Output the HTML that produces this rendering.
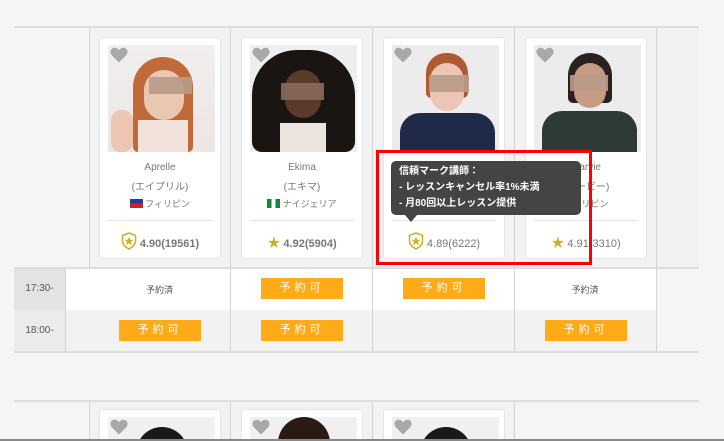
<!DOCTYPE html>
<html style="width:724px;height:441px;overflow:hidden"><head><meta charset="utf-8"><style>
*{margin:0;padding:0;box-sizing:border-box}
body{width:724px;height:441px;overflow:hidden;background:#f5f5f5;font-family:"Liberation Sans","Noto Sans CJK JP",sans-serif;position:relative;color:#666}
.abs{position:absolute}
.hl{position:absolute;height:2px;background:#ddd}
.vl{position:absolute;width:1px;background:#d4d4d4}
.card{position:absolute;width:122px;height:222px;background:#fff;border:1px solid #e6e6e6;border-radius:4px;overflow:hidden}
.photo{position:absolute;left:8px;top:7px;width:107px;height:107px;overflow:hidden;background:#eee}
.heart{position:absolute;left:10px;top:9px;width:18px;height:16px}
.name{position:absolute;left:0;width:100%;text-align:center;font-size:10px;color:#777}
.div{position:absolute;left:8px;right:8px;top:182px;height:1px;background:#e3e3e3}
.rate{position:absolute;top:194px;left:0;width:100%;text-align:center;font-size:11px;color:#777;font-weight:bold}
.rate svg{vertical-align:-3px;margin-right:3px}
.btn{position:absolute;width:82px;height:21px;background:#ffab18;color:#fff;font-size:11px;text-align:center;line-height:21px;letter-spacing:4px}
.blur{position:absolute;background:#b99a8a;opacity:.9}
</style></head><body>
<svg width="0" height="0" style="position:absolute"><defs>
<symbol id="h" viewBox="0 0 18 16"><path d="M9 15.5 L2 8.5 C-0.5 6 0 1.5 4 0.8 C6.3 0.4 8 1.8 9 3.3 C10 1.8 11.7 0.4 14 0.8 C18 1.5 18.5 6 16 8.5 Z" fill="#a8a8a8"/></symbol>
<symbol id="sh" viewBox="0 0 16 18"><path d="M8 1 L14.5 3.5 L14.5 9 C14.5 13 11 15.5 8 17 C5 15.5 1.5 13 1.5 9 L1.5 3.5 Z" fill="#fff" stroke="#c9b22a" stroke-width="1.6"/><path d="M8 4.5 L9.2 7.8 L12.5 7.9 L9.9 9.9 L10.8 13.1 L8 11.2 L5.2 13.1 L6.1 9.9 L3.5 7.9 L6.8 7.8 Z" fill="#c9b22a"/></symbol>
</defs></svg>
<div class="hl" style="left:14px;top:26px;width:685px"></div>
<div class="abs" style="left:89px;top:28px;width:610px;height:240px;background:#f2f2f2"></div>
<div class="hl" style="left:14px;top:267px;width:685px"></div>
<div class="abs" style="left:14px;top:269px;width:51px;height:41px;background:#e3e3e3"></div>
<div class="abs" style="left:65px;top:269px;width:591px;height:41px;background:#fff"></div>
<div class="abs" style="left:14px;top:310px;width:51px;height:41px;background:#ebebeb"></div>
<div class="abs" style="left:65px;top:310px;width:591px;height:41px;background:#f2f2f2"></div>
<div class="hl" style="left:14px;top:351px;width:685px"></div>
<div class="vl" style="left:89px;top:28px;height:240px"></div>
<div class="vl" style="left:65px;top:269px;height:83px"></div>
<div class="vl" style="left:230px;top:28px;height:324px"></div>
<div class="vl" style="left:372px;top:28px;height:324px"></div>
<div class="vl" style="left:514px;top:28px;height:324px"></div>
<div class="vl" style="left:656px;top:28px;height:324px"></div>
<div class="abs" style="left:14px;top:283px;width:51px;text-align:center;font-size:10px;color:#555">17:30-</div>
<div class="abs" style="left:14px;top:325px;width:51px;text-align:center;font-size:10px;color:#555">18:00-</div>

<div class="card" style="left:99px;top:37px">
 <div class="photo" style="background:linear-gradient(#f0eeee,#ece6e4)">
  <div class="abs" style="left:25px;top:12px;width:60px;height:95px;border-radius:30px 30px 5px 5px;background:#c06a3a"></div>
  <div class="abs" style="left:36px;top:25px;width:40px;height:50px;border-radius:20px;background:#e9c7b3"></div>
  <div class="abs" style="left:30px;top:75px;width:50px;height:32px;background:#f1e2dc"></div>
  <div class="abs" style="left:3px;top:65px;width:22px;height:42px;border-radius:10px;background:#efc5b3"></div>
  <div class="blur" style="left:41px;top:32px;width:43px;height:17px"></div>
 </div>
 <svg class="heart"><use href="#h"/></svg>
 <div class="name" style="top:124px">Aprelle</div>
 <div class="name" style="top:140px">(エイプリル)</div>
 <div class="name" style="top:159px;font-size:9px"><span style="display:inline-block;width:13px;height:9px;background:linear-gradient(#1a3fa0 50%,#d62020 50%);vertical-align:-1px;margin-right:2px"></span>フィリピン</div>
 <div class="div"></div>
 <div class="rate"><svg width="16" height="18"><use href="#sh"/></svg>4.90(19561)</div>
</div>
<div class="card" style="left:241px;top:37px">
 <div class="photo" style="background:#eeeeee">
  <div class="abs" style="left:2px;top:5px;width:103px;height:102px;border-radius:45px 45px 10px 10px;background:#1a1512"></div>
  <div class="abs" style="left:35px;top:25px;width:36px;height:48px;border-radius:18px;background:#5a3a2a"></div>
  <div class="abs" style="left:30px;top:78px;width:46px;height:29px;background:#ebe3dd"></div>
  <div class="blur" style="left:31px;top:38px;width:43px;height:17px;background:#8a6a5a"></div>
 </div>
 <svg class="heart"><use href="#h"/></svg>
 <div class="name" style="top:124px">Ekima</div>
 <div class="name" style="top:140px">(エキマ)</div>
 <div class="name" style="top:159px;font-size:9px"><span style="display:inline-block;width:13px;height:9px;background:linear-gradient(90deg,#0a8a3a 33%,#fff 33% 66%,#0a8a3a 66%);vertical-align:-1px;margin-right:2px"></span>ナイジェリア</div>
 <div class="div"></div>
 <div class="rate"><span style="color:#c9b22a;font-size:13px">★</span> 4.92(5904)</div>
</div>
<div class="card" style="left:383px;top:37px">
 <div class="photo" style="background:#ececec">
  <div class="abs" style="left:34px;top:8px;width:42px;height:45px;border-radius:20px 20px 5px 5px;background:#b05a34"></div>
  <div class="abs" style="left:38px;top:18px;width:34px;height:48px;border-radius:17px;background:#ecc6b4"></div>
  <div class="abs" style="left:8px;top:68px;width:95px;height:39px;border-radius:20px 20px 0 0;background:#1e2a48"></div>
  <div class="blur" style="left:37px;top:30px;width:40px;height:17px"></div>
 </div>
 <svg class="heart"><use href="#h"/></svg>
 <div class="div"></div>
 <div class="rate" style="font-weight:normal"><svg width="16" height="18"><use href="#sh"/></svg>4.89(6222)</div>
</div>
<div class="card" style="left:525px;top:37px">
 <div class="photo" style="background:#ececec">
  <div class="abs" style="left:34px;top:8px;width:44px;height:50px;border-radius:22px 22px 5px 5px;background:#2a2220"></div>
  <div class="abs" style="left:40px;top:18px;width:32px;height:45px;border-radius:16px;background:#c79a84"></div>
  <div class="abs" style="left:8px;top:66px;width:95px;height:41px;border-radius:20px 20px 0 0;background:#2e3a36"></div>
  <div class="blur" style="left:36px;top:30px;width:38px;height:16px"></div>
 </div>
 <svg class="heart"><use href="#h"/></svg>
 <div class="name" style="top:124px">Marvie</div>
 <div class="name" style="top:140px">(マービー)</div>
 <div class="name" style="top:159px;font-size:9px">フィリピン</div>
 <div class="div"></div>
 <div class="rate" style="font-weight:normal"><span style="color:#c9b22a;font-size:13px">★</span> 4.91(3310)</div>
</div>

<div class="abs" style="left:391px;top:161px;width:190px;height:54px;background:#444;border-radius:5px;color:#fff;font-size:10px;font-weight:bold;line-height:16px;padding:3px 8px">信頼マーク講師：<br>- レッスンキャンセル率1%未満<br>- 月80回以上レッスン提供</div>
<div class="abs" style="left:405px;top:215px;width:0;height:0;border-left:6px solid transparent;border-right:6px solid transparent;border-top:7px solid #444"></div>
<div class="abs" style="left:376px;top:150px;width:216px;height:115px;border:3px solid #f00"></div>

<div class="abs" style="left:89px;top:283px;width:141px;text-align:center;font-size:9px;color:#555">予約済</div>
<div class="btn" style="left:261px;top:278px">予約可</div>
<div class="btn" style="left:403px;top:278px">予約可</div>
<div class="abs" style="left:514px;top:283px;width:142px;text-align:center;font-size:9px;color:#555">予約済</div>
<div class="btn" style="left:119px;top:320px">予約可</div>
<div class="btn" style="left:261px;top:320px">予約可</div>
<div class="btn" style="left:545px;top:320px">予約可</div>

<div class="hl" style="left:14px;top:400px;width:685px"></div>
<div class="abs" style="left:89px;top:402px;width:426px;height:39px;background:#f2f2f2"></div>
<div class="vl" style="left:89px;top:402px;height:39px"></div>
<div class="vl" style="left:230px;top:402px;height:39px"></div>
<div class="vl" style="left:372px;top:402px;height:39px"></div>
<div class="vl" style="left:514px;top:402px;height:39px"></div>
<div class="card" style="left:99px;top:409px;height:32px"><div class="photo" style="background:#f0f0f0;height:25px"><div class="abs" style="left:28px;top:10px;width:52px;height:60px;border-radius:26px;background:#1a1818"></div></div><svg class="heart"><use href="#h"/></svg></div>
<div class="card" style="left:241px;top:409px;height:32px"><div class="photo" style="background:#f0f0f0;height:25px"><div class="abs" style="left:28px;top:0px;width:52px;height:60px;border-radius:26px;background:#2a1a14"></div></div><svg class="heart"><use href="#h"/></svg></div>
<div class="card" style="left:383px;top:409px;height:32px"><div class="photo" style="background:#f0f0f0;height:25px"><div class="abs" style="left:28px;top:10px;width:52px;height:60px;border-radius:26px;background:#1a1818"></div></div><svg class="heart"><use href="#h"/></svg></div>
<div class="abs" style="left:0;top:439px;width:724px;height:2px;background:#888"></div>
</body></html>
